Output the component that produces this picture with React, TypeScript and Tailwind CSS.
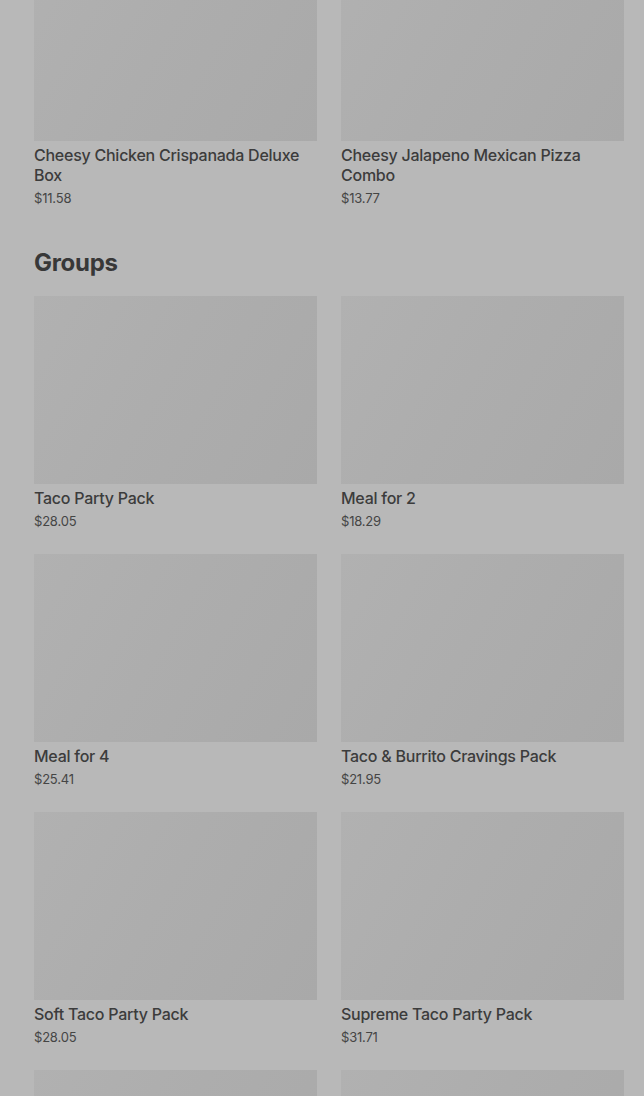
import React from "react";

type Item = { name: string; price: string };

const top: Item[] = [
  { name: "Cheesy Chicken Crispanada Deluxe Box", price: "$11.58" },
  { name: "Cheesy Jalapeno Mexican Pizza Combo", price: "$13.77" },
];

const groups: Item[] = [
  { name: "Taco Party Pack", price: "$28.05" },
  { name: "Meal for 2", price: "$18.29" },
  { name: "Meal for 4", price: "$25.41" },
  { name: "Taco & Burrito Cravings Pack", price: "$21.95" },
  { name: "Soft Taco Party Pack", price: "$28.05" },
  { name: "Supreme Taco Party Pack", price: "$31.71" },
];

function Card({ item }: { item: Item }) {
  return (
    <div className="flex flex-col">
      <div className="h-[188px] w-full bg-[linear-gradient(120deg,#b1b1b1_0%,#adadad_45%,#a9a9a9_100%)]" />
      <div className="mt-[4px] text-[16px] leading-[20px] font-medium text-[#3c3c3c] tracking-[-0.25px]">
        {item.name}
      </div>
      <div className="mt-[4px] text-[13px] leading-[18px] text-[#454545] tracking-[-0.2px]">{item.price}</div>
    </div>
  );
}

export default function App() {
  return (
    <div
      className="w-[644px] h-[1096px] overflow-hidden bg-[#b8b8b8] pl-[34px] pr-[20px]"
      style={{ fontFamily: "Inter, 'Noto Sans', sans-serif" }}
    >
      <div className="mt-[-47px] grid grid-cols-2 gap-x-[24px]">
        {top.map((it) => (
          <Card key={it.name} item={it} />
        ))}
      </div>
      <h2 className="mt-[40px] text-[24px] leading-[32px] font-bold text-[#383838] tracking-[-0.3px]">
        Groups
      </h2>
      <div className="mt-[17px] grid grid-cols-2 gap-x-[24px] gap-y-[24px]">
        {groups.map((it) => (
          <Card key={it.name} item={it} />
        ))}
        <div className="h-[188px] w-full bg-[linear-gradient(120deg,#b1b1b1_0%,#adadad_45%,#a9a9a9_100%)]" />
        <div className="h-[188px] w-full bg-[linear-gradient(120deg,#b1b1b1_0%,#adadad_45%,#a9a9a9_100%)]" />
      </div>
    </div>
  );
}
